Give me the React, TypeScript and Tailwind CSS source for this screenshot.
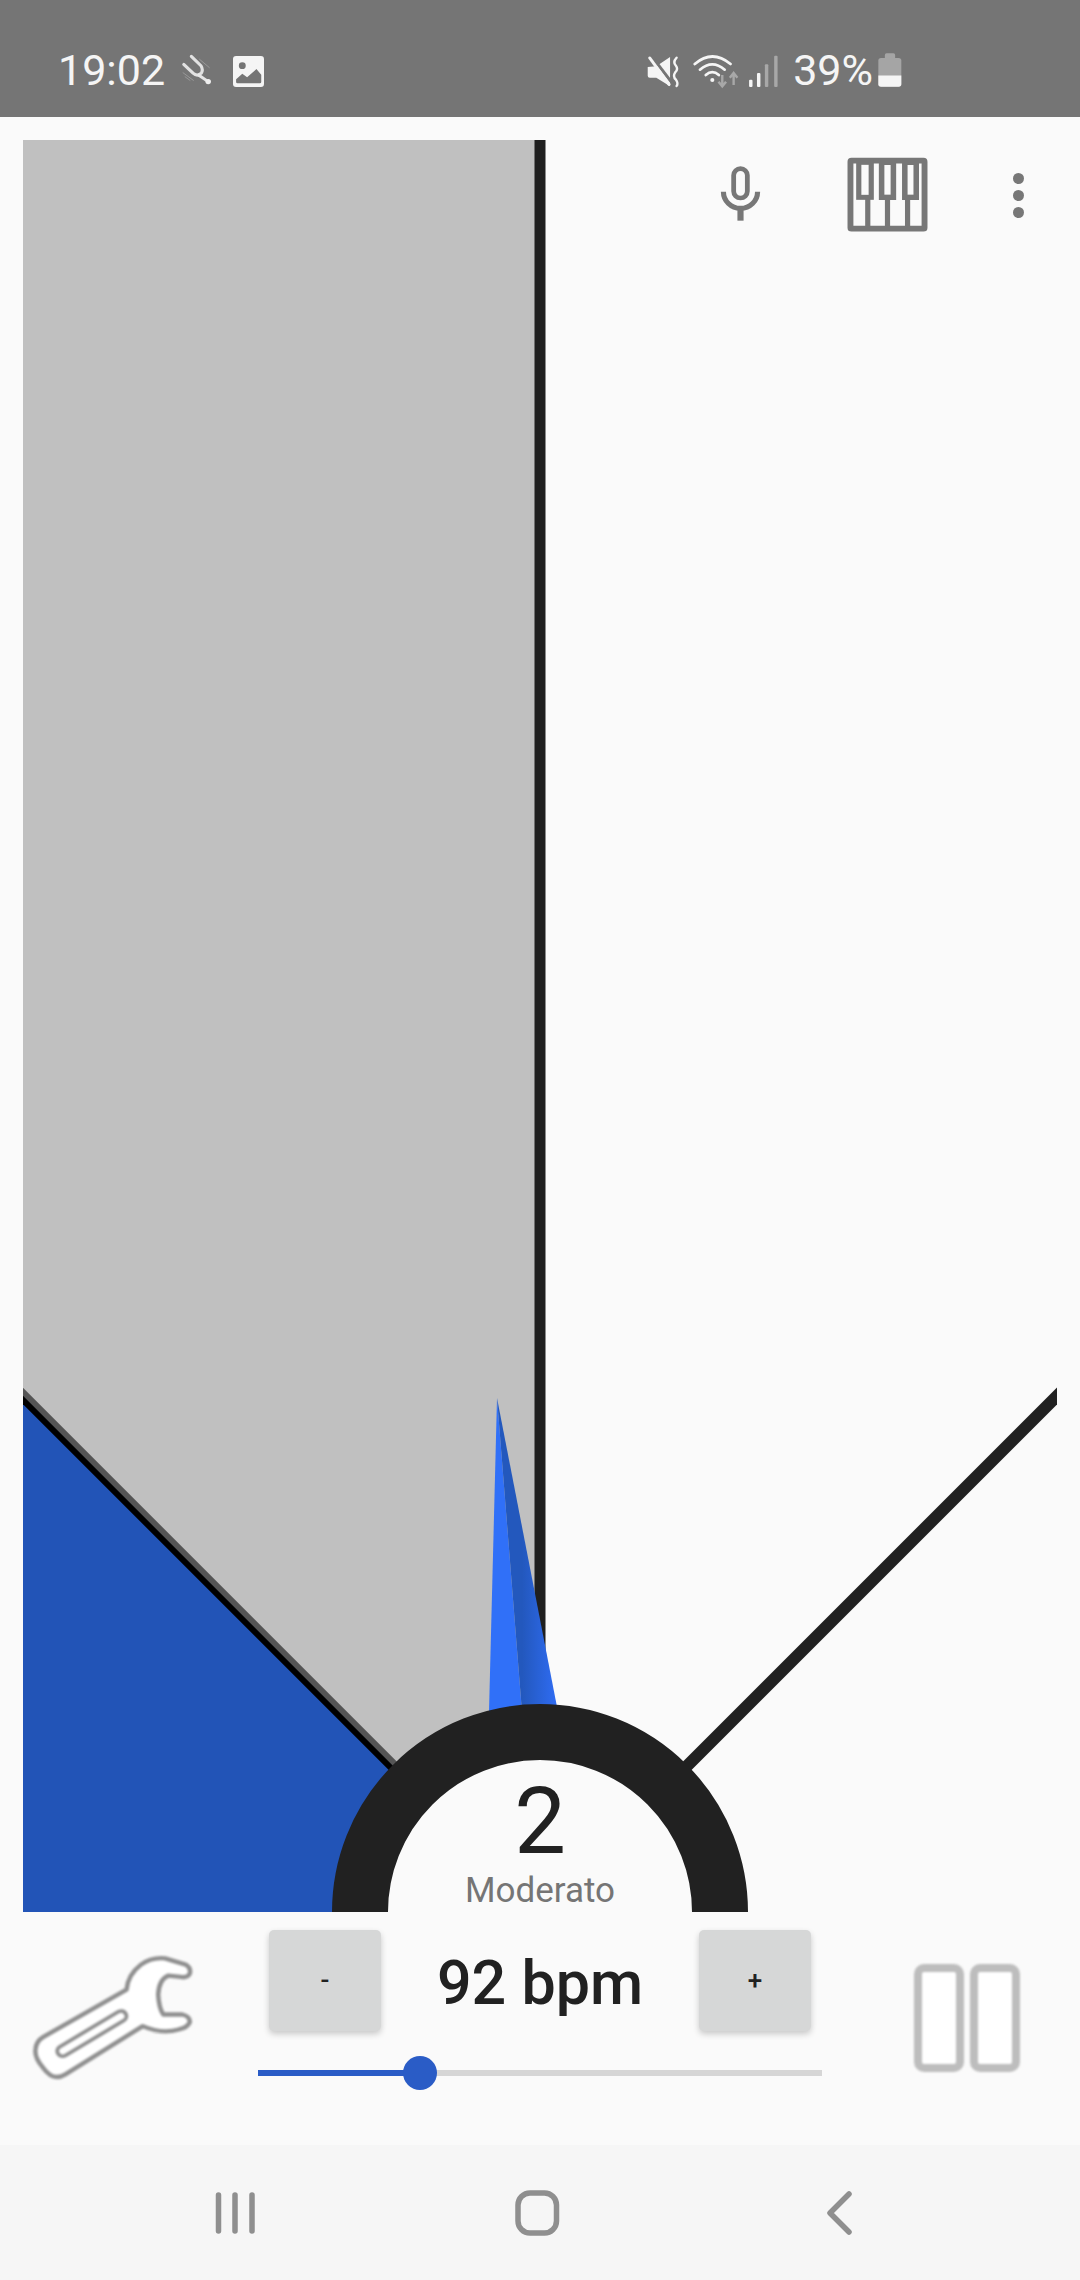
import React from "react";

function ForkIcon() {
  return (
    <svg className="w-[31px] h-[32px]" viewBox="525 165 90 95" preserveAspectRatio="none">
      <path d="M533 196 L560 222 Q572 233 584 222 Q590 212 583 200 L555 172" stroke="#e2e2e2" strokeWidth="9" fill="none" strokeLinecap="round" strokeLinejoin="round" />
      <path d="M577 228 L604 247" stroke="#e6e6e6" strokeWidth="9" strokeLinecap="round" />
      <circle cx="604" cy="247" r="8" fill="#eeeeee" />
      <path d="M578 180 L608 206 M530 220 L562 244 M536 232 L552 244" stroke="#a8a8a8" strokeWidth="2" fill="none" />
    </svg>
  );
}

function ImageIcon() {
  return (
    <svg className="w-[31px] h-[31px]" viewBox="677 168 90 93" preserveAspectRatio="none">
      <rect x="677" y="168" width="90" height="93" rx="9" fill="#f5f5f5" />
      <circle cx="704" cy="197" r="10" fill="#757575" />
      <path d="M686 238 L704 221 L718 232 L745 207 L759 224 L759 246 Q759 250 755 250 L690 250 Q686 250 686 246 Z" fill="#757575" />
    </svg>
  );
}

function StatusRight() {
  return (
    <svg className="w-[134px] h-[40px]" viewBox="305 152 390 120" preserveAspectRatio="none">
      <path d="M310 200 L335 198 L375 170 L375 258 L335 232 L316 232 Q310 232 310 226 Z" fill="#f5f5f5" />
      <path d="M320 166 L384 252" stroke="#757575" strokeWidth="9" />
      <path d="M316 173 L372 252" stroke="#f5f5f5" strokeWidth="9" strokeLinecap="round" />
      <path d="M394 172 Q382 185 392 196 Q400 207 390 216 Q382 228 392 238 Q400 250 394 257" stroke="#f5f5f5" strokeWidth="7" fill="none" strokeLinecap="round" />
      <path d="M447 191 Q498 146 551 191" stroke="#f5f5f5" strokeWidth="8" fill="none" strokeLinecap="round" />
      <path d="M462 208 Q498 176 534 208" stroke="#f5f5f5" strokeWidth="8" fill="none" strokeLinecap="round" />
      <path d="M479 224 Q498 207 517 224" stroke="#f5f5f5" strokeWidth="8" fill="none" strokeLinecap="round" />
      <circle cx="498" cy="239" r="6" fill="#f5f5f5" />
      <path d="M527 224 L527 254 M516 244 L527 258 L538 244" stroke="#a8a8a8" strokeWidth="7" fill="none" />
      <path d="M560 254 L560 220 M549 232 L560 218 L571 232" stroke="#a8a8a8" strokeWidth="7" fill="none" />
      <rect x="605" y="238" width="10" height="22" rx="3" fill="#f5f5f5" />
      <rect x="628" y="218" width="10" height="42" rx="3" fill="#f5f5f5" />
      <rect x="651" y="192" width="10" height="68" rx="3" fill="#a8a8a8" />
      <rect x="678" y="166" width="10" height="94" rx="3" fill="#a8a8a8" />
    </svg>
  );
}

function Battery() {
  return (
    <svg className="w-[24px] h-[34px]" viewBox="980 160 70 103" preserveAspectRatio="none">
      <rect x="1000" y="161" width="30" height="18" rx="5" fill="#a5a5a5" />
      <rect x="981" y="175" width="67" height="87" rx="8" fill="#a5a5a5" />
      <path d="M981 228 H1048 V254 Q1048 262 1040 262 H989 Q981 262 981 254 Z" fill="#f5f5f5" />
    </svg>
  );
}

function MicIcon() {
  return (
    <svg className="w-[41px] h-[57px]" viewBox="524 498 120 171" preserveAspectRatio="none">
      <rect x="564" y="506" width="40" height="88" rx="20" fill="none" stroke="#777777" strokeWidth="14" />
      <path d="M534 575 A50 50 0 0 0 634 575" fill="none" stroke="#777777" strokeWidth="15" />
      <rect x="575" y="625" width="18" height="37" fill="#777777" />
    </svg>
  );
}

function PianoIcon() {
  return (
    <svg className="w-[81px] h-[75px]" viewBox="893 472 234 225" preserveAspectRatio="none">
      <rect x="903" y="483" width="214" height="204" rx="3" fill="none" stroke="#777777" strokeWidth="17" />
      <rect x="927" y="488" width="36" height="105" fill="none" stroke="#777777" strokeWidth="15" />
      <rect x="993" y="488" width="34" height="105" fill="none" stroke="#777777" strokeWidth="16" />
      <rect x="1060" y="488" width="33" height="105" fill="none" stroke="#777777" strokeWidth="16" />
      <path d="M953 595 V682 M1010 595 V682 M1068 595 V682" stroke="#777777" strokeWidth="15" />
    </svg>
  );
}

function Wrench() {
  return (
    <svg className="w-[165px] h-[128px] blur-[1px]" viewBox="90 160 480 385" preserveAspectRatio="none">
      <path
        d="M165 533 Q145 533 125 505 Q100 475 103 450 Q105 425 125 413 L368 270 Q372 225 410 195 Q440 172 480 176 L540 195 Q556 205 552 222 Q545 236 525 232 L490 228 Q462 240 460 285 Q462 325 475 345 L530 345 Q552 350 552 368 Q545 385 520 390 Q470 405 415 380 L190 525 Q178 533 165 533 Z"
        fill="#ffffff"
        stroke="#8f8f8f"
        strokeWidth="13"
        strokeLinejoin="round"
      />
      <path d="M182 455 L352 350" stroke="#8f8f8f" strokeWidth="42" strokeLinecap="round" />
      <path d="M182 455 L352 350" stroke="#ffffff" strokeWidth="20" strokeLinecap="round" />
    </svg>
  );
}

function Pause() {
  return (
    <svg className="w-[108px] h-[108px] blur-[0.8px]" viewBox="0 0 108 108">
      <rect x="4" y="4" width="42" height="100" rx="6" fill="#ffffff" stroke="#bdbdbd" strokeWidth="8" />
      <rect x="60" y="4" width="42" height="100" rx="6" fill="#ffffff" stroke="#bdbdbd" strokeWidth="8" />
    </svg>
  );
}

function Dial() {
  return (
    <svg className="absolute inset-0 w-[1034px] h-[1772px]" viewBox="23 140 1034 1772">
      <defs>
        <linearGradient id="needleRight" gradientUnits="userSpaceOnUse" x1="522" y1="1700" x2="557" y2="1700">
          <stop offset="0" stopColor="#2358bd" />
          <stop offset="1" stopColor="#2f6cf3" />
        </linearGradient>
      </defs>
      <polygon points="23,140 540,140 540,1912 23,1912" fill="#c0c0c0" />
      <polygon points="23,1396 540,1913 23,1913" fill="#2254b7" />
      <line x1="13" y1="1382" x2="540" y2="1909" stroke="#555555" strokeWidth="6" />
      <line x1="13" y1="1390" x2="540" y2="1917" stroke="#000000" strokeWidth="6" />
      <rect x="534.5" y="140" width="11" height="1772" fill="#1f1f1f" />
      <line x1="1067" y1="1386" x2="540" y2="1913" stroke="#212121" strokeWidth="12" />
      <polygon points="497,1398 489,1712 522,1712" fill="#3070f8" />
      <polygon points="497,1398 522,1712 558,1712" fill="url(#needleRight)" />
      <circle cx="540" cy="1912" r="180" fill="#fafafa" stroke="#212121" strokeWidth="56" />
    </svg>
  );
}

export default function App() {
  return (
    <div className="flex flex-col w-[1080px] h-[2280px] bg-[#fafafa] overflow-hidden" style={{ fontFamily: "Roboto, sans-serif" }}>
      <div className="flex items-start h-[117px] bg-[#757575] pl-[58px] pr-[178px] text-[#f5f5f5] shrink-0">
        <span className="text-[43px] font-normal leading-[50px] mt-[45px] w-[123px]">19:02</span>
        <div className="mt-[54px]"><ForkIcon /></div>
        <div className="mt-[56px] ml-[21px]"><ImageIcon /></div>
        <div className="mt-[51px] ml-auto"><StatusRight /></div>
        <span className="text-[43px] font-normal leading-[50px] mt-[45px] ml-[13px]">39%</span>
        <div className="mt-[53px] ml-[5px]"><Battery /></div>
      </div>
      <div className="px-[23px] pt-[23px] shrink-0">
        <div className="relative h-[1772px] w-[1034px] overflow-hidden">
          <Dial />
          <div className="absolute right-[33px] top-[17px] flex items-start">
            <div className="mt-[9px] mr-[86px]"><MicIcon /></div>
            <div className="mr-[85px]"><PianoIcon /></div>
            <div className="mt-[16px] flex flex-col gap-[6px]">
              <span className="block w-[11px] h-[11px] rounded-full bg-[#777777]" />
              <span className="block w-[11px] h-[11px] rounded-full bg-[#777777]" />
              <span className="block w-[11px] h-[11px] rounded-full bg-[#777777]" />
            </div>
          </div>
          <div className="absolute left-[365px] w-[304px] bottom-[1px] flex flex-col items-center">
            <span className="text-[92px] font-normal leading-[92px] text-[#212121] mb-[3px]">2</span>
            <span className="text-[35px] font-normal leading-[40px] text-[#757575]">Moderato</span>
          </div>
        </div>
      </div>
      <div className="flex items-start flex-1 pl-[31px]">
        <div className="mt-[41px]"><Wrench /></div>
        <div className="w-[564px] ml-[62px] pt-[18px]">
          <div className="flex items-center justify-between px-[11px]">
            <button className="flex items-center justify-center w-[112px] h-[101px] bg-[#d6d7d7] rounded-[5px] shadow-[0_3px_6px_rgba(0,0,0,0.2)] text-[26px] font-medium text-[#212121]">-</button>
            <span className="text-[61px] font-medium leading-[68px] text-[#212121] mt-[5px]">92 bpm</span>
            <button className="flex items-center justify-center w-[112px] h-[101px] bg-[#d6d7d7] rounded-[5px] shadow-[0_3px_6px_rgba(0,0,0,0.2)] text-[26px] font-medium text-[#212121]">+</button>
          </div>
          <div className="relative flex mt-[39px] h-[6px] bg-[#d6d6d6]">
            <div className="h-[6px] w-[162px] bg-[#2a5cc6]" />
            <div className="absolute left-[145px] top-[-14px] w-[34px] h-[34px] rounded-full bg-[#2a5cc6]" />
          </div>
        </div>
        <div className="mt-[52px] ml-[92px]"><Pause /></div>
      </div>
      <div className="flex items-center justify-center h-[135px] bg-[#f6f6f6] shrink-0">
        <svg className="w-[1080px] h-[135px]" viewBox="0 2145 1080 135">
          <path d="M218.5 2195 V2231 M235 2195 V2231 M252 2195 V2231" stroke="#8f8f8f" strokeWidth="5.5" strokeLinecap="round" />
          <rect x="518" y="2193" width="38.5" height="40" rx="12" fill="none" stroke="#8f8f8f" strokeWidth="5.5" />
          <path d="M849 2194 L830 2213 L849 2232" fill="none" stroke="#8f8f8f" strokeWidth="5.5" strokeLinecap="round" strokeLinejoin="round" />
        </svg>
      </div>
    </div>
  );
}
